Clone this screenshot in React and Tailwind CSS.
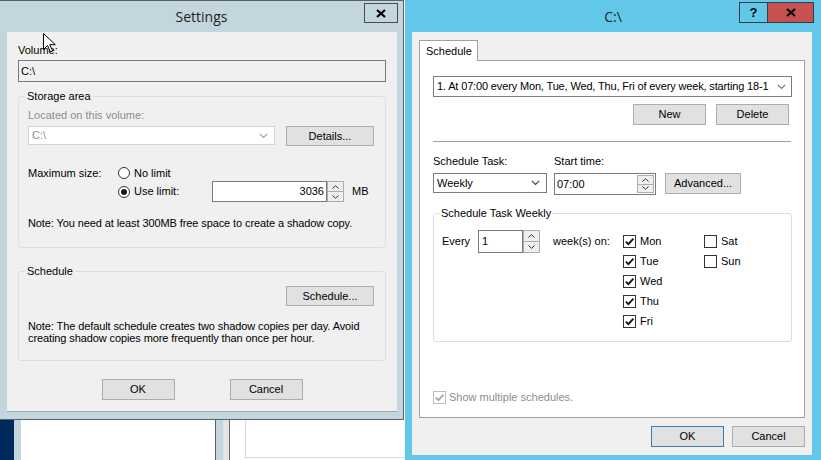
import React from "react";

const Chevron = ({ color = "#444" }) => (
  <svg width="9" height="6" viewBox="0 0 9 6">
    <path d="M0.8 0.8l3.7 3.7 3.7-3.7" fill="none" stroke={color} strokeWidth="1.2" />
  </svg>
);

const Tiny = ({ up }) => (
  <svg width="7" height="4" viewBox="0 0 7 4">
    <path d={up ? "M0.5 3.5L3.5 0.7 6.5 3.5" : "M0.5 0.5L3.5 3.3 6.5 0.5"} fill="none" stroke="#333" strokeWidth="1" />
  </svg>
);

const Spinner = ({ className = "" }) => (
  <div className={"flex flex-col w-[17px] " + className}>
    <div className="flex-1 flex items-center justify-center border border-[#acacac] bg-[#efefef]">
      <Tiny up />
    </div>
    <div className="flex-1 flex items-center justify-center border border-t-0 border-[#acacac] bg-[#efefef]">
      <Tiny />
    </div>
  </div>
);

const Button = ({ children, className = "" }) => (
  <div className={"flex items-center justify-center bg-[#e1e1e1] border border-[#adadad] " + className}>
    {children}
  </div>
);

const Radio = ({ checked }) => (
  <span className="w-[12px] h-[12px] rounded-full border border-[#333] bg-white flex items-center justify-center">
    {checked && <span className="w-[6px] h-[6px] rounded-full bg-[#1a1a1a]" />}
  </span>
);

const Check = ({ checked, disabled }) => (
  <span
    className={
      "w-[13px] h-[13px] border bg-white flex items-center justify-center shrink-0 " +
      (disabled ? "border-[#bcbcbc]" : "border-[#333]")
    }
  >
    {checked && (
      <svg width="11" height="11" viewBox="0 0 11 11">
        <path d="M1.8 5.6l2.6 2.6 5-5.6" fill="none" stroke={disabled ? "#a8a8a8" : "#111"} strokeWidth="1.8" />
      </svg>
    )}
  </span>
);

const Day = ({ label, checked }) => (
  <div className="h-[20px] flex items-center">
    <Check checked={checked} />
    <span className="ml-[4px]">{label}</span>
  </div>
);

const SettingsWindow = () => (
  <div className="absolute left-0 top-0 w-[404px] h-[420px] bg-[#c4d6dd] border-t border-r border-b border-[#5b6267]">
    <div className="h-[31px] flex items-center justify-center font-['Open_Sans',sans-serif] text-[14px] text-[#1e1e1e]">
      Settings
    </div>
    <div className="absolute left-[364px] top-[2px] w-[34px] h-[20px] border border-[#4a4a4a] flex items-center justify-center">
      <svg width="10" height="9" viewBox="0 0 10 9">
        <path d="M1 1l8 7M9 1L1 8" stroke="#000" strokeWidth="2.2" />
      </svg>
    </div>

    <div className="ml-[7px] w-[390px] h-[380px] bg-[#f0f0f0] border-b border-[#9aa8ae] pt-[12px] px-[11px]">
      <div>Volume:</div>
      <div className="mt-[3px] h-[22px] border border-[#7a7a7a] flex items-center px-[2px]">C:\</div>

      <fieldset className="mt-[8px] border border-[#d9dfe2] rounded-[3px]">
        <legend className="ml-[6px] px-[2px]">Storage area</legend>
        <div className="px-[9px] pb-[17px]">
          <div className="mt-[6px] text-[#8d8d8d]">Located on this volume:</div>
          <div className="mt-[4px] flex items-start">
            <div className="w-[247px] h-[19px] bg-white border border-[#d3d3d3] flex items-center justify-between pl-[3px] pr-[6px] text-[#8d8d8d]">
              <span>C:\</span>
              <Chevron color="#a0a0a0" />
            </div>
            <Button className="ml-[11px] w-[88px] h-[20px]">Details...</Button>
          </div>
          <div className="mt-[19px] h-[16px] flex items-center">
            <div className="w-[90px]">Maximum size:</div>
            <Radio />
            <span className="ml-[4px]">No limit</span>
          </div>
          <div className="h-[21px] flex items-center">
            <div className="w-[90px]" />
            <div className="w-[94px] flex items-center">
              <Radio checked />
              <span className="ml-[4px]">Use limit:</span>
            </div>
            <div className="w-[115px] h-[21px] bg-white border border-[#7a7a7a] flex items-center justify-end pr-[2px]">
              3036
            </div>
            <Spinner className="h-[21px]" />
            <span className="ml-[8px]">MB</span>
          </div>
          <div className="mt-[15px] tracking-[-0.1px]">Note: You need at least 300MB free space to create a shadow copy.</div>
        </div>
      </fieldset>

      <fieldset className="mt-[17px] border border-[#d9dfe2] rounded-[3px]">
        <legend className="ml-[6px] px-[2px]">Schedule</legend>
        <div className="px-[9px] pb-[16px]">
          <div className="mt-[8px] flex justify-end pr-[2px]">
            <Button className="w-[88px] h-[20px]">Schedule...</Button>
          </div>
          <div className="mt-[14px] leading-[12px] tracking-[-0.1px]">
            Note: The default schedule creates two shadow copies per day. Avoid
            <br />
            creating shadow copies more frequently than once per hour.
          </div>
        </div>
      </fieldset>

      <div className="mt-[18px] flex justify-center gap-[55px]">
        <Button className="w-[73px] h-[21px]">OK</Button>
        <Button className="w-[73px] h-[21px]">Cancel</Button>
      </div>
    </div>

    <svg className="absolute left-[43px] top-[32px]" width="13" height="20" viewBox="0 0 13 20">
      <path d="M0.5 0.5v16l4-4 3 6.5 2.2-1-3-6.3h5.6z" fill="#fff" stroke="#000" strokeWidth="1" />
    </svg>
  </div>
);

const ScheduleWindow = () => (
  <div className="absolute left-[405px] top-0 w-[416px] h-[460px] bg-[#62c8e9]">
    <div className="h-[32px] flex items-center justify-center font-['Open_Sans',sans-serif] text-[14px] text-[#1e1e1e]">
      C:\
    </div>
    <div className="absolute left-[334px] top-[2px] w-[29px] h-[21px] border border-[#3b3b3b] flex items-center justify-center font-bold text-[13px]">
      ?
    </div>
    <div className="absolute left-[362px] top-[2px] w-[47px] h-[21px] bg-[#c75050] border border-[#3b3b3b] flex items-center justify-center">
      <svg width="10" height="9" viewBox="0 0 10 9">
        <path d="M1 1l8 7M9 1L1 8" stroke="#000" strokeWidth="2.2" />
      </svg>
    </div>

    <div className="ml-[7px] w-[400px] h-[423px] bg-[#f0f0f0] pt-[8px]">
      <div className="ml-[7px] relative z-10 w-[59px] h-[21px] -mb-[1px] bg-white border border-b-0 border-[#a0a0a0] pl-[6px] flex items-center">
        Schedule
      </div>
      <div className="ml-[7px] w-[386px] h-[358px] bg-white border border-[#a0a0a0]">
        <div className="ml-[13px] mt-[15px] w-[359px] h-[21px] border border-[#7a7a7a] flex items-center pl-[3px] pr-[5px]">
          <span className="flex-1 whitespace-nowrap tracking-[-0.15px]">
            1. At 07:00 every Mon, Tue, Wed, Thu, Fri of every week, starting 18-1
          </span>
          <span className="ml-[2px]">
            <Chevron color="#777" />
          </span>
        </div>
        <div className="mt-[7px] flex justify-end pr-[15px] gap-[10px]">
          <Button className="w-[73px] h-[21px]">New</Button>
          <Button className="w-[73px] h-[21px]">Delete</Button>
        </div>
        <div className="mt-[16px] ml-[13px] w-[358px] h-px bg-[#a0a0a0]" />
        <div className="mt-[13px] ml-[13px] flex">
          <div className="w-[121px]">Schedule Task:</div>
          <div>Start time:</div>
        </div>
        <div className="mt-[5px] ml-[13px] flex items-start">
          <div className="w-[114px] h-[20px] border border-[#7a7a7a] flex items-center justify-between pl-[3px] pr-[6px]">
            <span>Weekly</span>
            <Chevron />
          </div>
          <div className="ml-[7px] w-[102px] h-[22px] border border-[#7a7a7a] flex items-center pl-[2px] pr-[1px]">
            <span className="flex-1">07:00</span>
            <Spinner className="h-[18px]" />
          </div>
          <Button className="ml-[9px] w-[76px] h-[21px]">Advanced...</Button>
        </div>

        <fieldset className="mt-[12px] ml-[13px] w-[359px] border border-[#d9dfe2] rounded-[3px]">
          <legend className="ml-[6px] px-[1px]">Schedule Task Weekly</legend>
          <div className="pt-[10px] pb-[10px] pl-[8px] flex items-start">
            <div className="h-[23px] flex items-center">
              <span className="w-[36px]">Every</span>
              <div className="w-[45px] h-[23px] bg-white border border-[#7a7a7a] flex items-center pl-[3px]">1</div>
              <Spinner className="h-[23px]" />
              <span className="ml-[13px] w-[70px]">week(s) on:</span>
            </div>
            <div className="mt-[1px] w-[81px]">
              <Day label="Mon" checked />
              <Day label="Tue" checked />
              <Day label="Wed" checked />
              <Day label="Thu" checked />
              <Day label="Fri" checked />
            </div>
            <div className="mt-[1px]">
              <Day label="Sat" />
              <Day label="Sun" />
            </div>
          </div>
        </fieldset>

        <div className="mt-[49px] ml-[13px] h-[13px] flex items-center text-[#8d8d8d]">
          <Check checked disabled />
          <span className="ml-[3px]">Show multiple schedules.</span>
        </div>
      </div>
      <div className="mt-[8px] flex justify-end pr-[7px] gap-[8px]">
        <Button className="w-[73px] h-[21px] !border-[#3c7db0]">OK</Button>
        <Button className="w-[73px] h-[21px]">Cancel</Button>
      </div>
    </div>
  </div>
);

export default function App() {
  return (
    <div className="relative w-[821px] h-[460px] overflow-hidden bg-white font-['Liberation_Sans',Arial,sans-serif] text-[11px] leading-[13px] text-black">
      {/* windows behind, peeking out below Settings */}
      <div className="absolute left-0 top-[420px] w-[405px] h-[40px] flex">
        <div className="w-[14px] bg-[#012a5c]" />
        <div className="w-[7px] bg-[#c4d6dd]" />
        <div className="w-[195px] bg-white border-r border-[#5b6267]" />
        <div className="w-[7px] bg-[#c4d6dd]" />
        <div className="w-[7px] bg-[#e4e4e4] border-r border-[#666]" />
        <div className="flex-1 bg-white pl-[15px] pb-[2px]">
          <div className="h-full border-l border-b border-[#d6dde0]" />
        </div>
      </div>
      <SettingsWindow />
      <ScheduleWindow />
    </div>
  );
}
